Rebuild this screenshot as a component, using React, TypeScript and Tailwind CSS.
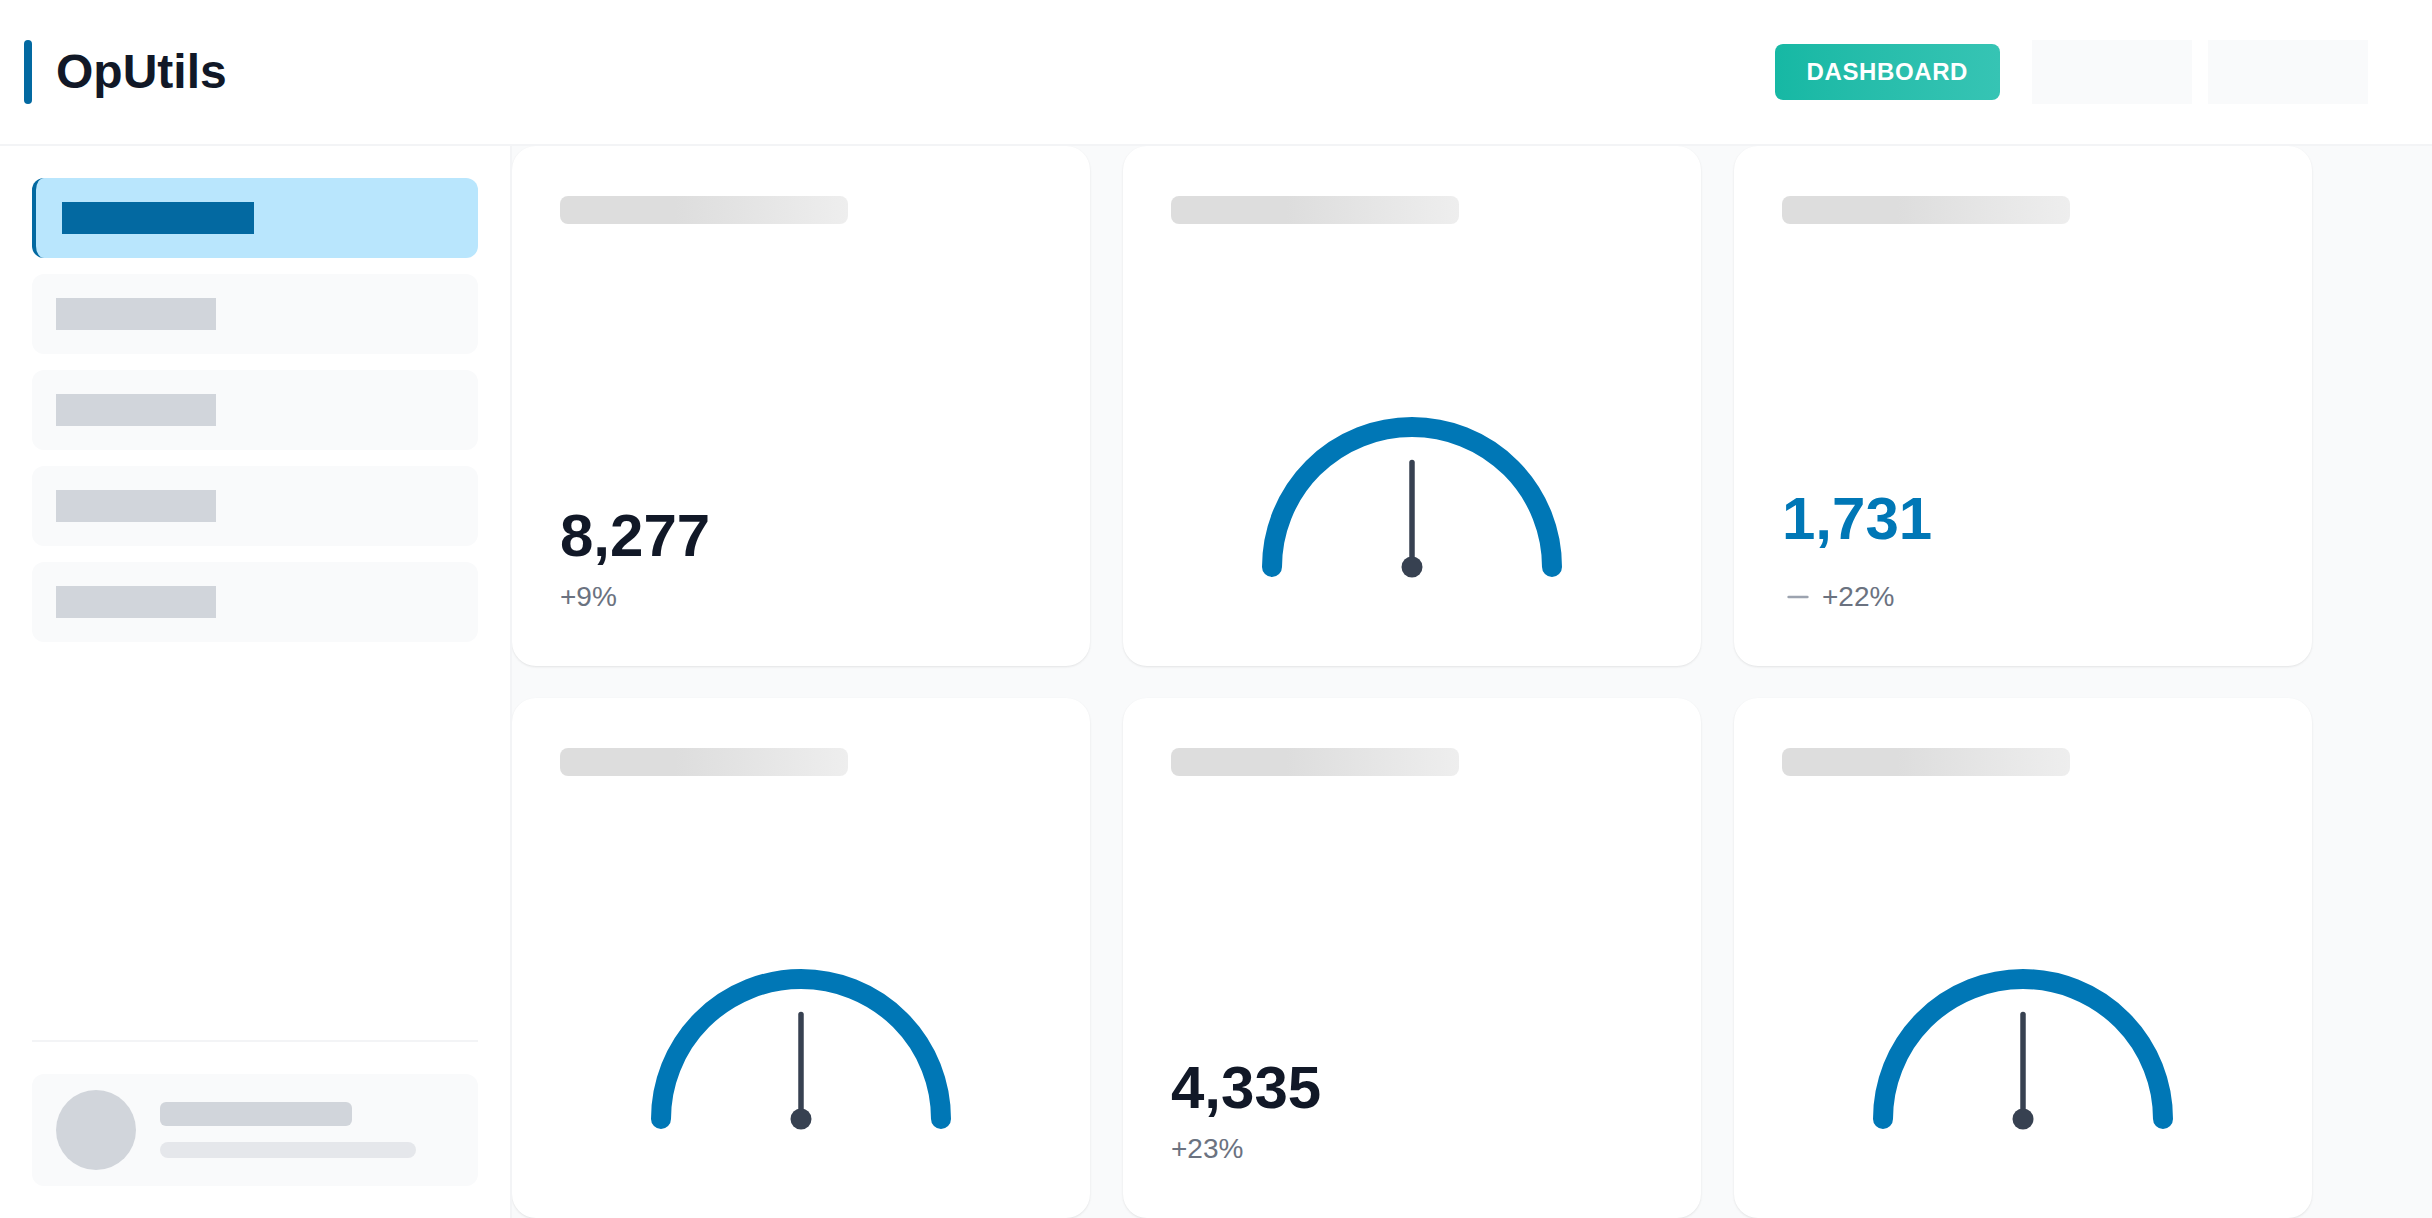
import React from "react";
import { Minus } from "lucide-react";

function Gauge() {
  return (
    <svg width="300" height="161" viewBox="0 0 300 161" className="overflow-visible">
      <path d="M 10 151 A 140 140 0 0 1 290 151" fill="none" stroke="#0077b6" strokeWidth="20" strokeLinecap="round" />
      <line x1="150" y1="151" x2="150" y2="46.5" stroke="#374151" strokeWidth="5.5" strokeLinecap="round" />
      <circle cx="150" cy="151" r="10.5" fill="#374151" />
    </svg>
  );
}

function TitleBar() {
  return <div className="mt-0.5 h-7 w-72 rounded-lg bg-[linear-gradient(90deg,#dddddd_40%,#eeeeee_100%)]" />;
}

const cardCls =
  "flex h-[520px] flex-col rounded-3xl bg-white p-12 shadow-[0_1px_3px_rgba(0,0,0,0.06),0_1px_2px_rgba(0,0,0,0.04)]";

function NumberCard({ value, change }: { value: string; change: string }) {
  return (
    <div className={cardCls}>
      <TitleBar />
      <div className="mt-auto">
        <div className="text-6xl leading-none font-bold text-[#111827]">{value}</div>
        <div className="mt-[10px] text-[28px] leading-[42px] text-[#6b7280]">{change}</div>
      </div>
    </div>
  );
}

function TrendCard({ value, change }: { value: string; change: string }) {
  return (
    <div className={cardCls}>
      <TitleBar />
      <div className="mt-auto">
        <div className="text-6xl leading-none font-bold text-[#0077b6]">{value}</div>
        <div className="mt-[27px] flex h-[42px] items-center gap-2">
          <Minus size={32} className="text-[#9ca3af]" />
          <span className="text-[28px] leading-[42px] text-[#6b7280]">{change}</span>
        </div>
      </div>
    </div>
  );
}

function GaugeCard() {
  return (
    <div className={cardCls}>
      <TitleBar />
      <div className="flex flex-1 items-end justify-center pb-[41px]">
        <Gauge />
      </div>
    </div>
  );
}

export default function App() {
  return (
    <div className="flex h-screen flex-col overflow-hidden bg-white font-['Liberation_Sans',Arial,sans-serif]">
      <header className="flex h-[146px] shrink-0 items-center justify-between border-b-2 border-[#f3f4f6] bg-white pr-16 pl-6">
        <div className="flex items-center gap-6">
          <div className="h-16 w-2 rounded-full bg-[#0369a1]" />
          <h1 className="text-5xl leading-none font-bold text-[#111827]">OpUtils</h1>
        </div>
        <div className="flex items-center gap-4">
          <button className="mr-4 rounded-lg bg-linear-to-r from-[#16b8a4] to-[#36c4b4] px-8 py-3 text-2xl font-bold tracking-wide text-white">
            DASHBOARD
          </button>
          <div className="h-16 w-40 bg-[#f9fafb]" />
          <div className="h-16 w-40 bg-[#f9fafb]" />
        </div>
      </header>
      <div className="flex min-h-0 flex-1">
        <aside className="flex w-[512px] shrink-0 flex-col border-r-2 border-[#f3f4f6] bg-white p-8">
          <nav className="flex flex-col gap-4">
            <div className="flex h-20 items-center rounded-xl border-l-4 border-[#0369a1] bg-[#b9e6fd] pl-[26px]">
              <div className="h-8 w-48 bg-[#0369a1]" />
            </div>
            {[0, 1, 2, 3].map((i) => (
              <div key={i} className="flex h-20 items-center rounded-xl bg-[#f9fafb] pl-6">
                <div className="h-8 w-40 bg-[#d1d5db]" />
              </div>
            ))}
          </nav>
          <div className="mt-auto border-t-2 border-[#f3f4f6] pt-8">
            <div className="flex items-center gap-6 rounded-xl bg-[#f9fafb] px-6 py-4">
              <div className="h-20 w-20 shrink-0 rounded-full bg-[#d1d5db]" />
              <div className="flex flex-col gap-4">
                <div className="h-6 w-48 rounded-md bg-[#d1d5db]" />
                <div className="h-4 w-64 rounded-full bg-[#e5e7eb]" />
              </div>
            </div>
          </div>
        </aside>
        <main className="min-w-0 flex-1 overflow-hidden bg-[#f9fafb]">
          <div className="grid grid-cols-[repeat(3,578px)] gap-x-[33px] gap-y-8">
            <NumberCard value="8,277" change="+9%" />
            <GaugeCard />
            <TrendCard value="1,731" change="+22%" />
            <GaugeCard />
            <NumberCard value="4,335" change="+23%" />
            <GaugeCard />
          </div>
        </main>
      </div>
    </div>
  );
}
